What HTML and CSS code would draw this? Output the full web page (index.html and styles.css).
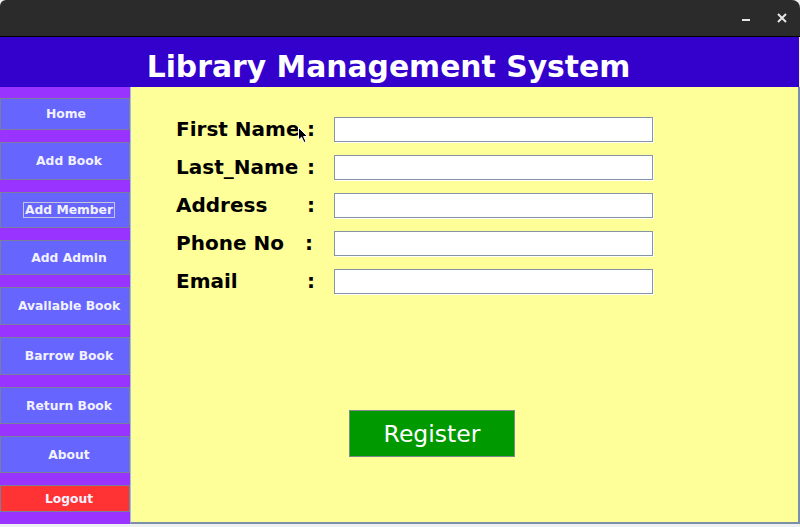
FILE: index.html
```html
<!DOCTYPE html>
<html>
<head>
<meta charset="utf-8">
<title>Library Management System</title>
<link rel="stylesheet" href="styles.css">
</head>
<body>
<div class="window">
  <div class="titlebar">
    <svg class="tb-icon" width="10" height="4" viewBox="0 0 10 4"><rect x="1" y="1" width="8" height="2" fill="#e6e6e6"/></svg>
    <svg class="tb-icon tb-close" width="10" height="10" viewBox="0 0 10 10"><path d="M1 1 L9 9 M9 1 L1 9" stroke="#e6e6e6" stroke-width="2"/></svg>
  </div>
  <div class="header"><h1 class="title">Library Management System</h1></div>
  <div class="content">
    <nav class="sidebar">
      <div class="btn b-home">Home</div>
      <div class="btn b-book">Add Book</div>
      <div class="btn b-member"><span class="focus">Add Member</span></div>
      <div class="btn b-admin">Add Admin</div>
      <div class="btn b-avail">Available Book</div>
      <div class="btn b-barrow">Barrow Book</div>
      <div class="btn b-return">Return Book</div>
      <div class="btn b-about">About</div>
      <div class="btn b-logout">Logout</div>
    </nav>
    <main class="main">
      <div class="form">
        <span class="lbl">First Name</span><span class="colon">:</span><span class="field"></span>
        <span class="lbl">Last_Name</span><span class="colon">:</span><span class="field"></span>
        <span class="lbl">Address</span><span class="colon">:</span><span class="field"></span>
        <span class="lbl">Phone No</span><span class="colon colon-left">:</span><span class="field"></span>
        <span class="lbl">Email</span><span class="colon">:</span><span class="field"></span>
      </div>
      <div class="register">Register</div>
      <svg class="cursor" width="11" height="17" viewBox="0 0 11 17"><path d="M0.5 0.5 L0.5 13 L3.5 10.2 L6 15.5 L8 14.6 L5.6 9.5 L9.5 9.5 Z" fill="#000" stroke="#fff" stroke-width="1"/></svg>
    </main>
  </div>
</div>
</body>
</html>
```
FILE: styles.css
```css
* { box-sizing: border-box; }
html, body { margin: 0; padding: 0; }
body {
  width: 800px;
  height: 527px;
  background: #eef0f4;
  font-family: "DejaVu Sans", "Liberation Sans", sans-serif;
  overflow: hidden;
}
.window { width: 800px; height: 527px; display: flex; flex-direction: column; }
.titlebar {
  height: 37px;
  background: #2b2b2b;
  border-bottom: 1px solid #000;
  border-radius: 6px 8px 0 0;
  display: flex;
  align-items: center;
  justify-content: flex-end;
  gap: 26px;
  padding-right: 13px;
}
.tb-icon { display: block; margin-top: 4px; }
.tb-close { margin-top: -1px; }
.header {
  height: 50px;
  background: #3300cc;
  margin-right: 1px;
  display: flex;
  align-items: center;
  justify-content: center;
  padding-right: 22px;
}
.title {
  margin: 0;
  color: #fff;
  font-size: 29.8px;
  font-weight: bold;
  line-height: 36px;
  padding-top: 9px;
}
.content { height: 437px; display: flex; }
.sidebar {
  width: 130px;
  background: #9933ff;
  display: flex;
  flex-direction: column;
  gap: 12px;
  padding-top: 11px;
}
.btn {
  background: #6666ff;
  border: 1px solid #7c7c9c;
  color: #f2f2ff;
  font-size: 12.3px;
  font-weight: bold;
  display: flex;
  align-items: center;
  justify-content: center;
  padding-left: 8px;
}
.b-home { height: 32px; padding-left: 2px; }
.b-book { height: 38px; }
.b-member { height: 36px; }
.b-admin { height: 35px; }
.b-avail { height: 38px; }
.b-barrow { height: 38px; }
.b-return { height: 37px; }
.b-about { height: 37px; }
.b-logout { height: 27px; background: #ff3333; }
.focus { border: 1px solid #c4c4dc; padding: 0 1px; line-height: 14px; }
.main {
  flex: 1;
  background: #ffff99;
  border-left: 1px solid #a3bde0;
  border-right: 2px solid #7a8fa8;
  border-bottom: 2px solid #7a8fa8;
  position: relative;
  padding: 30px 0 0 45px;
}
.form {
  display: grid;
  grid-template-columns: 131px 27px 319px;
  grid-auto-rows: 25px;
  row-gap: 13px;
  align-items: center;
}
.lbl, .colon {
  font-size: 20px;
  font-weight: bold;
  color: #000;
  line-height: 25px;
  white-space: nowrap;
}
.colon-left { margin-left: -2px; }
.field {
  height: 25px;
  background: #fff;
  border: 1px solid #8594a6;
  box-shadow: 1px 1px 0 #fff;
}
.register {
  width: 166px;
  height: 47px;
  margin: 116px 0 0 173px;
  background: #009900;
  border: 1px solid #7a8a8a;
  color: #fff;
  font-size: 23.5px;
  display: flex;
  align-items: center;
  justify-content: center;
}
.cursor { position: absolute; left: 167px; top: 40px; }
```
